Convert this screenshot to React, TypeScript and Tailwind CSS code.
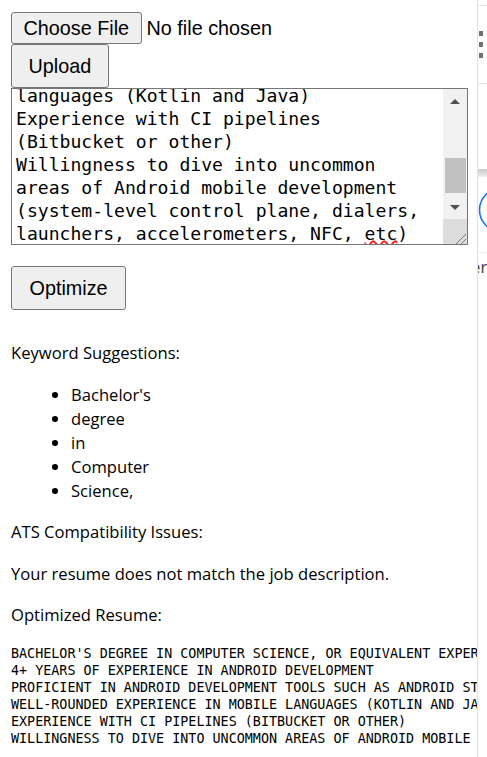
import React from "react";

const btn =
  "bg-[#efefef] border border-[#767676] rounded-[3px] text-black text-[19.8px] leading-[23px] [font-family:'Liberation_Sans',Arial,sans-serif]";

const jobLines = [
  "languages (Kotlin and Java)",
  "Experience with CI pipelines",
  "(Bitbucket or other)",
  "Willingness to dive into uncommon",
  "areas of Android mobile development",
  "(system-level control plane, dialers,",
];

const keywords = ["Bachelor's", "degree", "in", "Computer", "Science,"];

const resumeLines = [
  "BACHELOR'S DEGREE IN COMPUTER SCIENCE, OR EQUIVALENT EXPERIENCE",
  "4+ YEARS OF EXPERIENCE IN ANDROID DEVELOPMENT",
  "PROFICIENT IN ANDROID DEVELOPMENT TOOLS SUCH AS ANDROID STUDIO",
  "WELL-ROUNDED EXPERIENCE IN MOBILE LANGUAGES (KOTLIN AND JAVA)",
  "EXPERIENCE WITH CI PIPELINES (BITBUCKET OR OTHER)",
  "WILLINGNESS TO DIVE INTO UNCOMMON AREAS OF ANDROID MOBILE DEVELOPMENT",
];

function Arrow({ up }: { up: boolean }) {
  return (
    <svg width="10" height="5" viewBox="0 0 10 5">
      <path d={up ? "M0 5L5 0L10 5Z" : "M0 0L5 5L10 0Z"} fill="#505050" />
    </svg>
  );
}

function ResumeBox() {
  return (
    <div className="flex w-[457px] h-[157px] border border-[#767676] bg-white">
      <div className="flex-1 overflow-hidden pl-[4px] [font-family:'DejaVu_Sans_Mono',monospace] text-[18.1px] leading-[23px] text-black">
        <div className="-mt-[5px]">
          {jobLines.map((l) => (
            <div key={l} className="whitespace-pre">
              {l}
            </div>
          ))}
          <div className="whitespace-pre">
            launchers, accelerometers, NFC,{" "}
            <span className="underline decoration-wavy decoration-[#ff1a1a] decoration-[1.5px] underline-offset-[0px]">
              etc
            </span>
            )
          </div>
        </div>
      </div>
      {/* scrollbar */}
      <div className="flex w-[24px] flex-col bg-[#f1f1f1]">
        <div className="flex h-[24px] items-center justify-center">
          <Arrow up />
        </div>
        <div className="h-[45px]" />
        <div className="ml-[2px] mr-[1px] h-[35px] bg-[#c1c1c1]" />
        <div className="h-[2px]" />
        <div className="flex h-[24px] items-center justify-center">
          <Arrow up={false} />
        </div>
        <div className="h-[25px] bg-[#dcdcdc]">
          <svg width="24" height="25" viewBox="0 0 24 25">
            <path d="M23 15L13 25M23 20L18 25" stroke="#7a7a7a" strokeWidth="1" />
          </svg>
        </div>
      </div>
    </div>
  );
}

function SidePanel() {
  return (
    <div className="flex flex-1 flex-col overflow-hidden border-l border-[#e2e2e2] bg-white">
      <div className="mt-[5px] h-px bg-[#e6e6e6]" />
      <div className="mt-[25px] flex flex-col gap-[6px] pl-px">
        <div className="h-[5px] w-[4px] bg-[#707070]" />
        <div className="h-[5px] w-[4px] bg-[#707070]" />
        <div className="h-[5px] w-[4px] bg-[#707070]" />
      </div>
      <div className="mt-[25px] h-px bg-[#e6e6e6]" />
      <div className="mt-[85px] h-[8px] bg-gradient-to-b from-[#c9c9c9] to-[#f0f0f0]" />
      <div className="mt-[10px] h-[46px]">
        <svg width="10" height="46" viewBox="0 0 10 46">
          <circle cx="23" cy="23" r="21.5" fill="none" stroke="#1a73e8" strokeWidth="1.6" />
        </svg>
      </div>
      <div className="mt-[19px] h-px bg-[#ececec]" />
      <div className="mt-[2px] flex justify-end whitespace-nowrap text-[16px] leading-[24px] text-[#444] [font-family:'Noto_Sans',sans-serif]">
        der
      </div>
    </div>
  );
}

export default function App() {
  return (
    <div className="flex h-[757px] w-full overflow-hidden bg-white text-black">
      <div className="w-[477px] shrink-0 overflow-hidden pl-[11px] pt-[12px]">
        <div className="flex items-center">
          <button type="button" className={`${btn} px-[11.5px] py-[3.5px]`}>
            Choose File
          </button>
          <span className="ml-[5px] text-[19.8px] leading-[23px] [font-family:'Liberation_Sans',Arial,sans-serif]">
            No file chosen
          </span>
        </div>
        <button type="button" className={`${btn} block px-[16.5px] py-[9.5px]`}>
          Upload
        </button>
        <ResumeBox />
        <button type="button" className={`${btn} mt-[21px] block px-[17.5px] py-[9.5px]`}>
          Optimize
        </button>

        <div className="mt-[31px] flex flex-col gap-[17.6px] text-[16.6px] leading-[24px] [font-family:'Open_Sans',sans-serif]">
          <p>Keyword Suggestions:</p>
          <ul className="list-disc pl-[60px]">
            {keywords.map((k) => (
              <li key={k}>{k}</li>
            ))}
          </ul>
          <p>ATS Compatibility Issues:</p>
          <p>Your resume does not match the job description.</p>
          <p>Optimized Resume:</p>
          <pre className="text-[13.4px] leading-[17px] [font-family:'DejaVu_Sans_Mono',monospace]">
            {resumeLines.join("\n")}
          </pre>
        </div>
      </div>
      <SidePanel />
    </div>
  );
}
